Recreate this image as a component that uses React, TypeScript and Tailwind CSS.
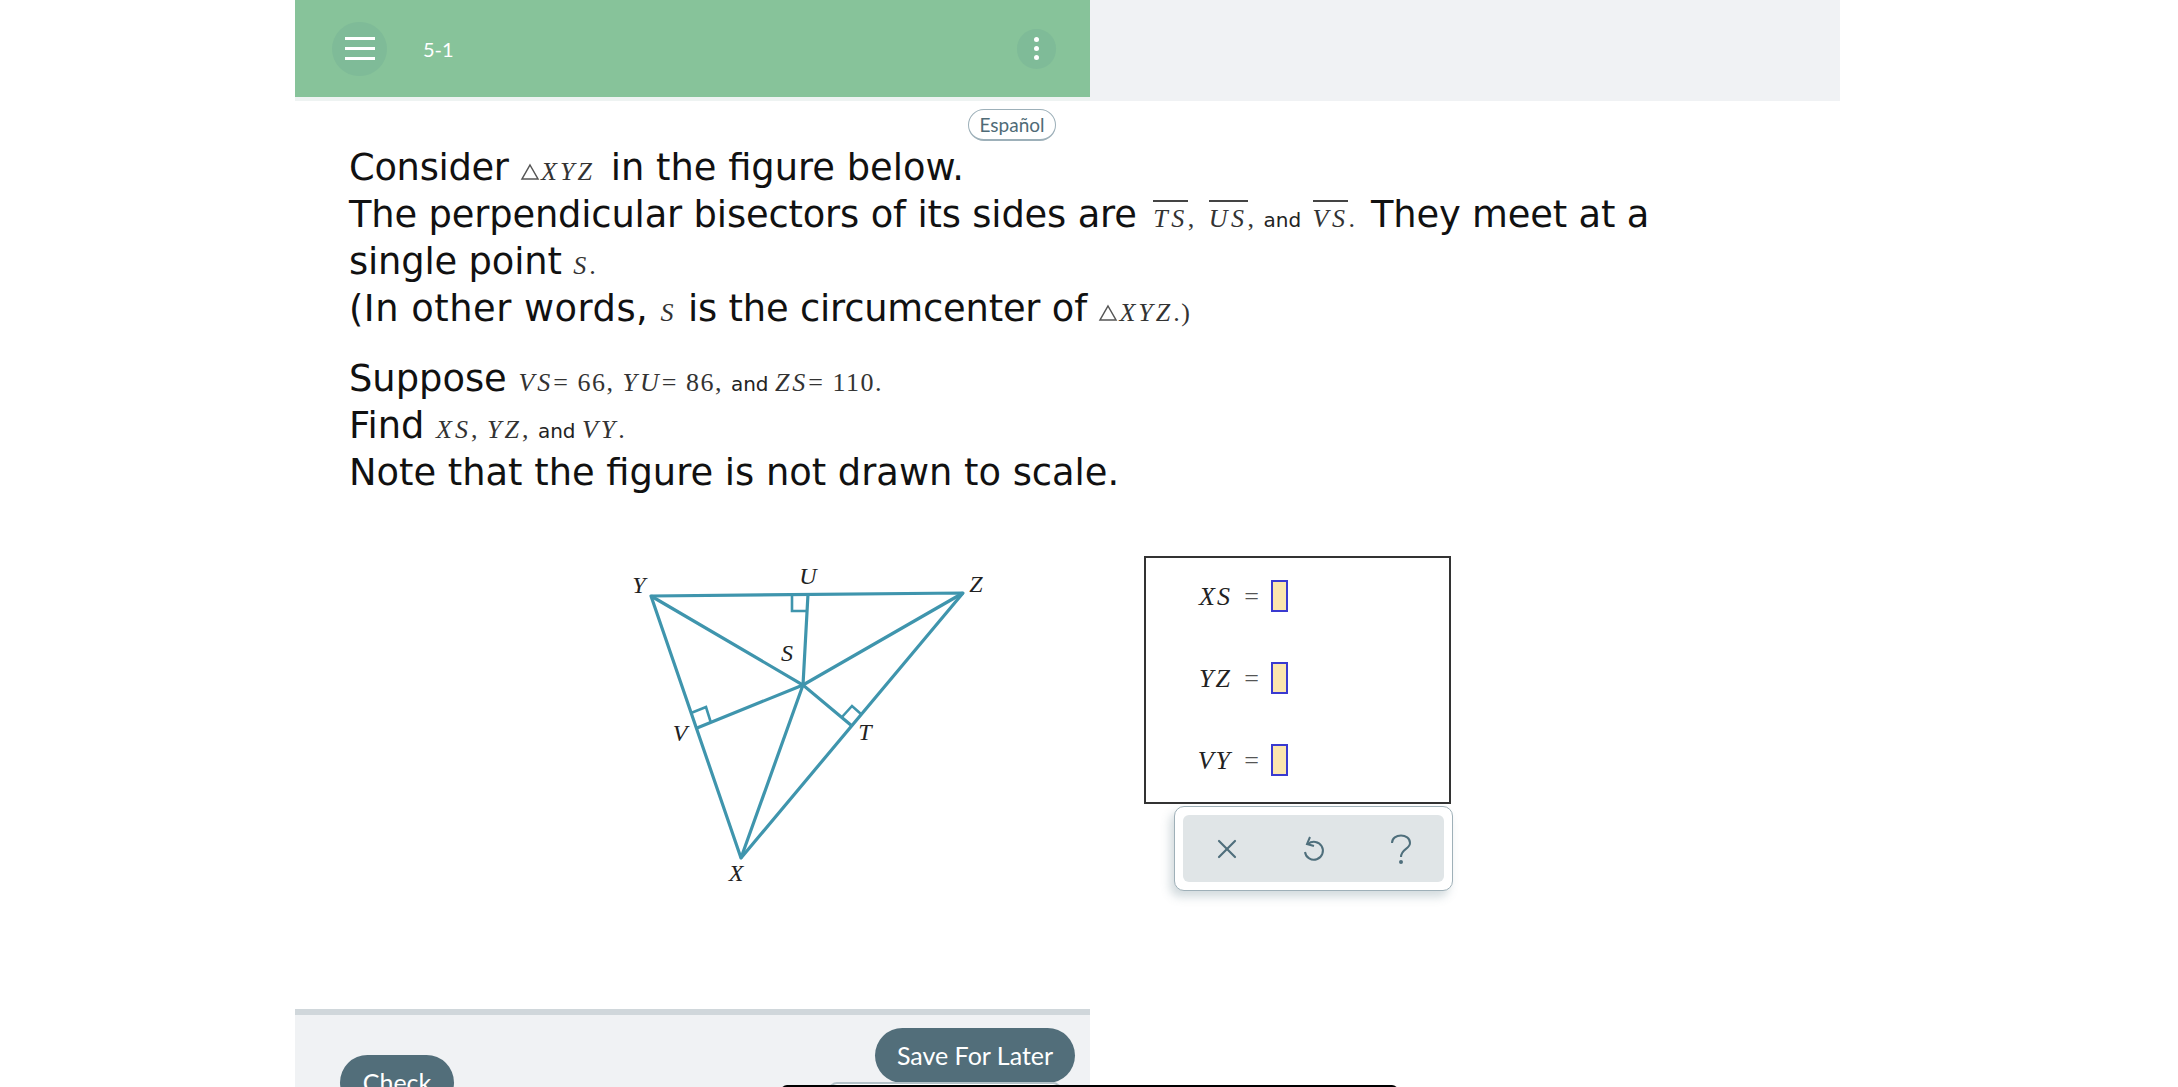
import { X } from 'lucide-react';

const Mi: React.FC<{ children: React.ReactNode }> = ({ children }) => (
  <span className="font-['Liberation_Serif',serif] italic text-[26px] leading-none text-[#333] tracking-[3px]">{children}</span>
);

const Plain: React.FC<{ children: React.ReactNode }> = ({ children }) => (
  <span className="font-['Liberation_Serif',serif] text-[26px] leading-none text-[#333] tracking-[1.5px]">{children}</span>
);

const And: React.FC = () => <span className="font-['DejaVu_Sans',sans-serif] text-[20px] leading-none tracking-normal text-[#222]"> and </span>;

const Over: React.FC<{ children: React.ReactNode }> = ({ children }) => (
  <span className="border-t-2 border-[#444] inline-block ml-[5px] leading-[34px] font-['Liberation_Serif',serif] italic text-[26px] text-[#333] tracking-[3.5px]">{children}</span>
);

const Tri: React.FC = () => (
  <svg width="20" height="18" viewBox="0 0 20 18" className="inline-block mr-[1px] align-[-1px]">
    <path d="M10 2 L18 16 L2 16 Z" fill="none" stroke="#555" strokeWidth="1.5" />
  </svg>
);

const Figure: React.FC = () => (
  <svg width="400" height="340" viewBox="0 0 400 340" className="shrink-0">
    <g fill="none" stroke="#3f95ad" strokeWidth="3.2">
      <path d="M41 45 L353 42 L131 307 Z" strokeLinejoin="round" />
      <path d="M41 45 L193 134 L242 175" />
      <path d="M353 42 L193 134 L87 177" />
      <path d="M198 43 L193 134 L131 307" />
      <path d="M182 44 L182 60 L197 60" strokeWidth="2.6" />
      <path d="M81 162 L96 156 L101 172" strokeWidth="2.6" />
      <path d="M232 166 L242 155 L251 163" strokeWidth="2.6" />
    </g>
    <g fontFamily="'Liberation Serif', serif" fontStyle="italic" fontSize="24" fill="#222" textAnchor="middle">
      <text x="29" y="42">Y</text>
      <text x="198" y="33">U</text>
      <text x="366" y="41">Z</text>
      <text x="177" y="110">S</text>
      <text x="70" y="190">V</text>
      <text x="255" y="189">T</text>
      <text x="126" y="330">X</text>
    </g>
  </svg>
);

const AnswerRow: React.FC<{ label: string }> = ({ label }) => (
  <div className="flex items-center h-[32px]">
    <span className="w-[60px] text-right font-['Liberation_Serif',serif] italic text-[26px] tracking-[2px] text-[#222]">{label}</span>
    <span className="w-[39px] text-center font-['Liberation_Serif',serif] text-[26px] text-[#555]">=</span>
    <span className="w-[17px] h-[32px] border-2 border-[#3a3ad0] bg-[#fbe6ae]" />
  </div>
);

export default function App() {
  return (
    <div className="w-[2178px] h-[1087px] overflow-hidden bg-white relative">
      <div className="ml-[295px] w-[1545px] flex flex-col h-full">
        <div className="flex items-start shrink-0">
          <div className="w-[795px] shrink-0">
            <div className="h-[97px] bg-[#87c39a] flex items-center pl-[37px] pr-[34px]">
              <div className="w-[55px] h-[54px] rounded-full bg-[#7fbb98] flex flex-col items-center justify-center gap-[7px]">
                <span className="w-[30px] h-[3px] bg-white" />
                <span className="w-[30px] h-[3px] bg-white" />
                <span className="w-[30px] h-[3px] bg-white" />
              </div>
              <span className="ml-[36px] text-white text-[20px] font-['Lato',sans-serif]">5-1</span>
              <div className="ml-auto w-[39px] h-[40px] rounded-full bg-[#7fbb98] flex flex-col items-center justify-center gap-[4px]">
                <span className="w-[5px] h-[5px] rounded-full bg-white" />
                <span className="w-[5px] h-[5px] rounded-full bg-white" />
                <span className="w-[5px] h-[5px] rounded-full bg-white" />
              </div>
            </div>
            <div className="h-[4px] bg-[#eef3f2]" />
          </div>
          <div className="flex-1 h-[101px] bg-[#f0f2f4]" />
        </div>

        <div className="w-[795px] flex justify-end pr-[34px] mt-[8px] shrink-0">
          <button className="h-[32px] w-[88px] pt-[1px] rounded-full border border-[#9db0b9] border-b-2 bg-white text-[#4f6b77] text-[19px] font-['Lato',sans-serif]">Español</button>
        </div>

        <div className="ml-[54px] mt-[3px] w-[1320px] font-['DejaVu_Sans',sans-serif] text-[36.8px] leading-[47px] text-[#111] shrink-0">
          <p><span className="tracking-[-0.3px]">Consider </span><Tri /><Mi>XYZ</Mi><span className="ml-[16px]">in the figure below.</span></p>
          <p className="tracking-[-0.15px]">The perpendicular bisectors of its sides are <Over>TS</Over><Plain>, </Plain><Over>US</Over><Plain>, </Plain><And /><Over>VS</Over><Plain>.</Plain><span className="ml-[3px]"> They meet at a</span> single point <Mi>S</Mi><Plain>.</Plain></p>
          <p><span className="tracking-[0.5px]">(In other words, </span><Mi>S</Mi><span className="tracking-[-0.18px]"> is the circumcenter of </span><Tri /><Mi>XYZ</Mi><Plain>.)</Plain></p>
          <p className="mt-[23px]">Suppose <Mi>VS</Mi><Plain>= 66, </Plain><Mi>YU</Mi><Plain>= 86, </Plain><And /><Mi>ZS</Mi><Plain>= 110.</Plain></p>
          <p>Find <Mi>XS</Mi><Plain>, </Plain><Mi>YZ</Mi><Plain>, </Plain><And /><Mi>VY</Mi><Plain>.</Plain></p>
          <p>Note that the figure is not drawn to scale.</p>
        </div>

        <div className="flex items-start ml-[315px] mt-[55px] shrink-0">
          <Figure />
          <div className="ml-[134px] mt-[5px]">
            <div className="w-[307px] h-[248px] border-2 border-[#333] pl-[26px] pt-[22px] flex flex-col gap-[50px]">
              <AnswerRow label="XS" />
              <AnswerRow label="YZ" />
              <AnswerRow label="VY" />
            </div>
            <div className="ml-[30px] mt-[2px] w-[279px] h-[85px] rounded-[10px] border border-[#9fb0b8] bg-white p-[8px] shadow-[-4px_6px_10px_rgba(80,110,125,0.25)]">
              <div className="h-full rounded-[6px] bg-[#e0e5e7] flex items-center pl-[28px] text-[#4f6f7c]">
                <X size={32} strokeWidth={1.6} />
                <svg width="24" height="30" viewBox="0 0 24 30" fill="none" stroke="#4f6f7c" strokeWidth="2" className="ml-[58px]">
                  <path d="M7 10 A9 9 0 1 1 4 18" />
                  <path d="M9 3 L6 10 L13 12" />
                </svg>
                <svg width="22" height="30" viewBox="0 0 22 30" fill="none" stroke="#4f6f7c" strokeWidth="2" className="ml-[65px]">
                  <path d="M2 9 C2 -1 20 -1 20 9 C20 15 11 15 11 23" />
                  <circle cx="11" cy="28" r="1" fill="#4f6f7c" />
                </svg>
              </div>
            </div>
          </div>
        </div>

        <div className="w-[795px] flex-1 min-h-0 mt-[118px] border-t-[6px] border-[#d0d7db] bg-[#f0f2f4] flex items-start justify-between pl-[45px] pr-[15px]">
          <button className="mt-[40px] w-[114px] h-[55px] rounded-full bg-[#526e7a] text-white text-[25px] font-['Lato',sans-serif] shrink-0">Check</button>
          <button className="mt-[13px] w-[200px] h-[55px] rounded-full bg-[#526e7a] text-white text-[25px] font-['Lato',sans-serif] shrink-0">Save For Later</button>
        </div>
      </div>
      <div className="absolute left-[829px] top-[1082px] w-[232px] h-[8px] rounded-t-[10px] border-2 border-[#b3c1c7] bg-white" />
      <div className="absolute left-[781px] top-[1085px] w-[617px] h-[6px] rounded-t-[6px] bg-black" />
    </div>
  );
}
